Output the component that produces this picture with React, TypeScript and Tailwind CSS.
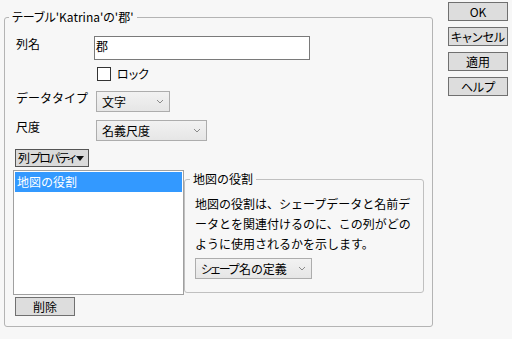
import React from "react";

const font = { fontFamily: '"Noto Sans CJK JP", "Noto Sans", sans-serif' };

function Chevron() {
  return (
    <svg width="8" height="5" viewBox="0 0 8 5" className="shrink-0">
      <path d="M1 1 L4 4 L7 1" fill="none" stroke="#8a8a8a" strokeWidth="1" />
    </svg>
  );
}

function Dropdown({ label, w }: { label: React.ReactNode; w: string }) {
  return (
    <div
      className={`${w} h-[21px] flex items-center justify-between pl-[5px] pr-[5px] border border-[#adadad] bg-gradient-to-b from-[#f2f2f2] to-[#e6e6e6] text-[12px] leading-[16px] text-black whitespace-nowrap [font-feature-settings:'palt']`}
    >
      <span>{label}</span>
      <Chevron />
    </div>
  );
}

function Btn({ label, w, h }: { label: string; w: string; h: string }) {
  return (
    <div
      className={`${w} ${h} flex items-center justify-center border border-[#707070] bg-[#dddddd] text-[12px] leading-[16px] text-black whitespace-nowrap [font-feature-settings:'palt']`}
    >
      {label}
    </div>
  );
}

export default function App() {
  return (
    <div
      className="w-[512px] h-[339px] bg-[#f7f7f7] flex items-start overflow-hidden text-black"
      style={font}
    >
      <div className="pl-[4px] pt-[9px]">
        <fieldset className="w-[429px] h-[318px] border border-[#b4b4b4] rounded-[3px]">
          <legend className="ml-[4px] px-[3px] text-[12px] leading-[16px] whitespace-nowrap [font-feature-settings:'palt']">
            テーブル'Katrina'の'郡'
          </legend>
          <div className="flex flex-col pl-[10px] pt-[11px] text-[12px] leading-[16px]">
            {/* 列名 */}
            <div className="flex items-start">
              <div className="w-[79px] pl-[1px]">列名</div>
              <div className="w-[216px] h-[24px] border border-[#7a7a7a] bg-white pl-[1px] pt-[1px]">
                郡
              </div>
            </div>
            {/* ロック */}
            <div className="flex items-center mt-[6px] pl-[82px]">
              <div className="w-[14px] h-[14px] border border-[#333333] bg-white" />
              <span className="ml-[6px] [font-feature-settings:'palt']">ロック</span>
            </div>
            {/* データタイプ */}
            <div className="flex items-start mt-[8px]">
              <div className="w-[81px] pl-[1px] whitespace-nowrap">データタイプ</div>
              <div className="mt-[1px]">
                <Dropdown label="文字" w="w-[74px]" />
              </div>
            </div>
            {/* 尺度 */}
            <div className="flex items-start mt-[7px]">
              <div className="w-[81px] pl-[1px]">尺度</div>
              <div className="mt-[1px]">
                <Dropdown label="名義尺度" w="w-[111px]" />
              </div>
            </div>
            {/* 列プロパティ */}
            <div className="mt-[8px] w-[74px] h-[18px] flex items-center justify-between pl-[2px] pr-[4px] border border-[#555555] bg-[#dadada] whitespace-nowrap [font-feature-settings:'palt']">
              <span>
                列<span className="tracking-[-1.8px]">プロパティ</span>
              </span>
              <svg width="8" height="5" viewBox="0 0 8 5" className="shrink-0">
                <path d="M0 0 L8 0 L4 5 Z" fill="#111" />
              </svg>
            </div>
            {/* list + group */}
            <div className="flex items-start mt-[3px] -ml-[2px]">
              <div className="w-[171px] h-[125px] border border-[#a0a0a0] bg-white p-[1px]">
                <div className="h-[20px] bg-[#3399ff] text-white pl-[2px] flex items-center">
                  地図の役割
                </div>
              </div>
              <fieldset className="w-[240px] h-[122px] mt-[1px] border border-[#c0c0c0] rounded-[3px]">
                <legend className="ml-[5px] px-[3px] text-[12px] leading-[16px]">
                  地図の役割
                </legend>
                <div className="pl-[10px] pt-[7px]">
                  <div className="text-[12px] leading-[20px] whitespace-nowrap">
                    <div>地図の役割は、シェープデータと名前デ</div>
                    <div>ータとを関連付けるのに、この列がどの</div>
                    <div>ように使用されるかを示します。</div>
                  </div>
                  <div className="mt-[4px]">
                    <Dropdown
                      label={
                        <>
                          <span className="tracking-[-1.5px]">シェープ</span>
                          <span className="ml-[1px]">名の定義</span>
                        </>
                      }
                      w="w-[117px]"
                    />
                  </div>
                </div>
              </fieldset>
            </div>
            {/* 削除 */}
            <div className="mt-[2px]">
              <Btn label="削除" w="w-[60px]" h="h-[19px]" />
            </div>
          </div>
        </fieldset>
      </div>
      <div className="ml-[15px] pt-[2px] flex flex-col gap-[6px]">
        <Btn label="OK" w="w-[60px]" h="h-[19px]" />
        <Btn label="キャンセル" w="w-[60px]" h="h-[19px]" />
        <Btn label="適用" w="w-[60px]" h="h-[19px]" />
        <Btn label="ヘルプ" w="w-[60px]" h="h-[19px]" />
      </div>
    </div>
  );
}
